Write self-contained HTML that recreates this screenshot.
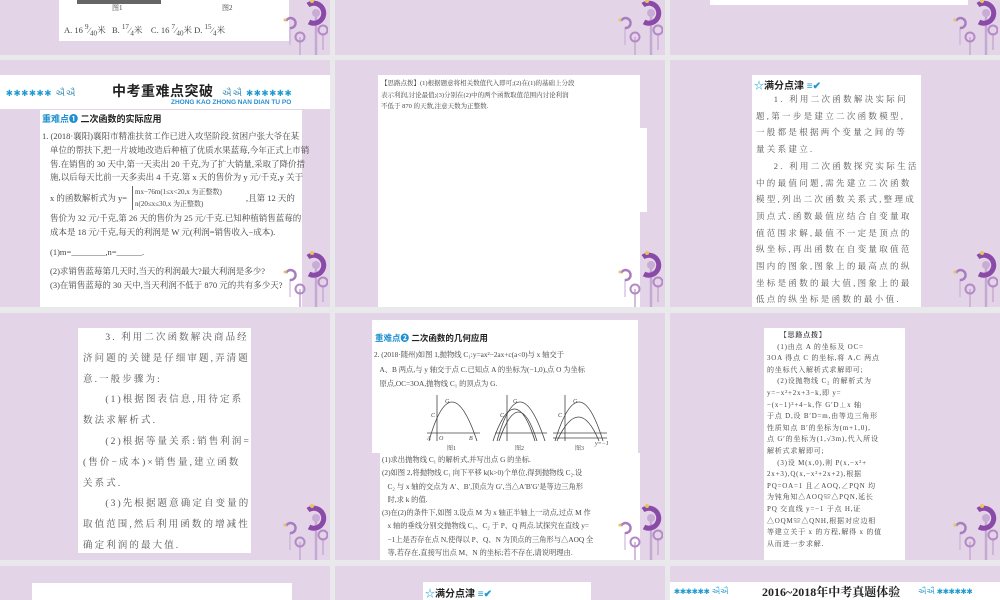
<!DOCTYPE html>
<html><head><meta charset="utf-8">
<style>
body{margin:0;width:1000px;height:600px;overflow:hidden;background:#e9e8ea;position:relative;font-family:"Liberation Serif","Noto Serif CJK SC",serif;color:#333}
.s{position:absolute;background:#e3d4e7;overflow:hidden}
.w{position:absolute;background:#fff}
.d{position:absolute;right:2px;bottom:0;width:46px;height:60px}
.t{position:absolute;font-size:8.5px;line-height:13.5px;color:#444;white-space:nowrap}
.b{position:absolute;font-size:9.5px;line-height:17px;color:#555;letter-spacing:2.6px;white-space:nowrap}
.hd{font-family:"Liberation Sans","Noto Sans CJK SC",sans-serif;font-weight:bold;color:#222}
</style></head><body>
<svg width="0" height="0" style="position:absolute"><defs>
<g id="fl">
<line x1="34" y1="18" x2="34" y2="60" stroke="#c6a9d3" stroke-width="2.5"/>
<line x1="18" y1="42" x2="18" y2="60" stroke="#c6a9d3" stroke-width="1.5"/>
<line x1="41" y1="38" x2="41" y2="55" stroke="#c6a9d3" stroke-width="1.5"/>
<line x1="8" y1="32" x2="8" y2="50" stroke="#c6a9d3" stroke-width="1"/>
<path d="M26 10 A10 10 0 1 1 27 27" fill="none" stroke="#8a4aa8" stroke-width="5"/>
<circle cx="34" cy="18" r="4" fill="#c9acd6"/>
<circle cx="30" cy="6" r="2" fill="#e8c45a"/>
<circle cx="18" cy="42" r="4.5" fill="none" stroke="#b48ac6" stroke-width="2"/>
<circle cx="41" cy="35" r="4.5" fill="none" stroke="#b48ac6" stroke-width="2"/>
<path d="M4 26 A5 5 0 1 1 8 33" fill="none" stroke="#a97cc0" stroke-width="2.5"/>
<circle cx="3" cy="25" r="1.5" fill="#e8c45a"/>
</g></defs></svg>

<!-- row 1 -->
<div class="s" style="left:0;top:0;width:330px;height:55px">
 <div class="w" style="left:59px;top:0;width:230px;height:41px">
  <div style="position:absolute;left:18px;top:0;width:84px;height:4px;background:#666"></div>
  <div class="t" style="left:53px;top:2px;font-size:7px">图1</div>
  <div class="t" style="left:163px;top:2px;font-size:7px">图2</div>
  <div class="t" style="left:5px;top:21px">A. 16 <sup>9</sup>⁄<sub>40</sub>米 &nbsp; B. <sup>17</sup>⁄<sub>4</sub>米 &nbsp;&nbsp; C. 16 <sup>7</sup>⁄<sub>40</sub>米 D. <sup>15</sup>⁄<sub>4</sub>米</div>
 </div>
 <svg class="d" viewBox="0 0 46 60"><use href="#fl"/></svg>
</div>
<div class="s" style="left:335px;top:0;width:330px;height:55px"><svg class="d" viewBox="0 0 46 60"><use href="#fl"/></svg></div>
<div class="s" style="left:670px;top:0;width:330px;height:55px">
 <div class="w" style="left:40px;top:0;width:258px;height:5px"></div>
 <svg class="d" viewBox="0 0 46 60"><use href="#fl"/></svg></div>

<!-- row 2 -->
<div class="s" style="left:0;top:60px;width:330px;height:247px">
 <div class="w" style="left:0;top:15px;width:330px;height:34px">
  <div style="position:absolute;left:6px;top:13px;color:#1e9ad0;font-size:9px;letter-spacing:1px">✱✱✱✱✱✱ <span style="color:#38a">ઐઐ</span></div>
  <div class="hd" style="position:absolute;left:112px;top:6px;font-size:14px;letter-spacing:0.5px">中考重难点突破</div>
  <div style="position:absolute;left:222px;top:13px;color:#1e9ad0;font-size:9px;letter-spacing:1px"><span style="color:#38a">ઐઐ</span> ✱✱✱✱✱✱</div>
  <div style="position:absolute;left:171px;top:24px;color:#2a8fd0;font-size:6.5px;font-weight:bold;font-family:'Liberation Sans',sans-serif">ZHONG KAO ZHONG NAN DIAN TU PO</div>
 </div>
 <div class="w" style="left:40px;top:50px;width:262px;height:234px">
  <div class="hd" style="position:absolute;left:2px;top:2px;font-size:9px"><span style="color:#1e8fd0">重难点❶</span> 二次函数的实际应用</div>
  <div class="t" style="left:2px;top:20px">1. (2018·襄阳)襄阳市精准扶贫工作已进入攻坚阶段.贫困户张大爷在某</div>
  <div class="t" style="left:10px;top:34px">单位的帮扶下,把一片坡地改造后种植了优质水果蓝莓,今年正式上市销</div>
  <div class="t" style="left:10px;top:48px">售.在销售的 30 天中,第一天卖出 20 千克,为了扩大销量,采取了降价措</div>
  <div class="t" style="left:10px;top:61px">施,以后每天比前一天多卖出 4 千克.第 x 天的售价为 y 元/千克,y 关于</div>
  <div class="t" style="left:92px;top:76px;font-size:7px;line-height:12px;border-left:1px solid #666;padding-left:2px">mx−76m(1≤x&lt;20,x 为正整数)<br>n(20≤x≤30,x 为正整数)</div>
  <div class="t" style="left:10px;top:82px">x 的函数解析式为 y=</div>
  <div class="t" style="left:206px;top:82px">,且第 12 天的</div>
  <div class="t" style="left:10px;top:102px">售价为 32 元/千克,第 26 天的售价为 25 元/千克.已知种植销售蓝莓的</div>
  <div class="t" style="left:10px;top:116px">成本是 18 元/千克,每天的利润是 W 元(利润=销售收入−成本).</div>
  <div class="t" style="left:10px;top:136px">(1)m=________,n=______.</div>
  <div class="t" style="left:10px;top:155px">(2)求销售蓝莓第几天时,当天的利润最大?最大利润是多少?</div>
  <div class="t" style="left:10px;top:169px">(3)在销售蓝莓的 30 天中,当天利润不低于 870 元的共有多少天?</div>
 </div>
 <svg class="d" viewBox="0 0 46 60"><use href="#fl"/></svg>
</div>
<div class="s" style="left:335px;top:60px;width:330px;height:247px">
 <div class="w" style="left:43px;top:15px;width:262px;height:232px"></div>
 <div class="w" style="left:300px;top:68px;width:12px;height:84px"></div>
 <div class="t" style="left:46px;top:18px;font-size:6.5px;line-height:11.5px">【思路点拨】(1)根据题意将相关数值代入即可;(2)在(1)的基础上分段<br>表示利润,讨论最值;(3)分别在(2)中的两个函数取值范围内讨论利润<br>不低于 870 的天数,注意天数为正整数.</div>
 <svg class="d" viewBox="0 0 46 60"><use href="#fl"/></svg>
</div>
<div class="s" style="left:670px;top:60px;width:330px;height:247px">
 <div class="w" style="left:82px;top:15px;width:169px;height:232px">
  <div class="hd" style="position:absolute;left:2px;top:2px;font-size:10px"><span style="color:#3ab0e0">☆</span>满分点津 <span style="color:#1e9ad0">≡✔</span></div>
  <div class="b" style="left:4px;top:16px;font-size:8.5px;line-height:16.7px;letter-spacing:2.3px">&nbsp;&nbsp;&nbsp;&nbsp;1. 利用二次函数解决实际问<br>题,第一步是建立二次函数模型,<br>一般都是根据两个变量之间的等<br>量关系建立.<br>&nbsp;&nbsp;&nbsp;&nbsp;2. 利用二次函数探究实际生活<br>中的最值问题,需先建立二次函数<br>模型,列出二次函数关系式,整理成<br>顶点式.函数最值应结合自变量取<br>值范围求解,最值不一定是顶点的<br>纵坐标,再出函数在自变量取值范<br>围内的图象,图象上的最高点的纵<br>坐标是函数的最大值,图象上的最<br>低点的纵坐标是函数的最小值.</div>
 </div>
 <svg class="d" viewBox="0 0 46 60"><use href="#fl"/></svg>
</div>

<!-- row 3 -->
<div class="s" style="left:0;top:313px;width:330px;height:247px">
 <div class="w" style="left:78px;top:15px;width:173px;height:225px">
  <div class="b" style="left:5px;top:0px;line-height:20.8px;letter-spacing:2.1px">&nbsp;&nbsp;&nbsp;&nbsp;&nbsp;3. 利用二次函数解决商品经<br>济问题的关键是仔细审题,弄清题<br>意.一般步骤为:<br>&nbsp;&nbsp;&nbsp;&nbsp;&nbsp;(1)根据图表信息,用待定系<br>数法求解析式.<br>&nbsp;&nbsp;&nbsp;&nbsp;&nbsp;(2)根据等量关系:销售利润=<br>(售价−成本)×销售量,建立函数<br>关系式.<br>&nbsp;&nbsp;&nbsp;&nbsp;&nbsp;(3)先根据题意确定自变量的<br>取值范围,然后利用函数的增减性<br>确定利润的最大值.</div>
 </div>
 <svg class="d" viewBox="0 0 46 60"><use href="#fl"/></svg>
</div>
<div class="s" style="left:335px;top:313px;width:330px;height:247px">
 <div class="w" style="left:37px;top:7px;width:266px;height:133px"></div>
 <div class="w" style="left:45px;top:140px;width:260px;height:107px"></div>
 <div class="hd" style="position:absolute;left:40px;top:19px;font-size:8.5px"><span style="color:#1e8fd0">重难点❷</span> 二次函数的几何应用</div>
 <div class="t" style="left:39px;top:35px;font-size:7.3px;line-height:14.7px">2. (2018·随州)如图 1,抛物线 C₁:y=ax²−2ax+c(a&lt;0)与 x 轴交于<br>&nbsp;&nbsp;&nbsp;A、B 两点,与 y 轴交于点 C.已知点 A 的坐标为(−1,0),点 O 为坐标<br>&nbsp;&nbsp;&nbsp;原点,OC=3OA,抛物线 C₁ 的顶点为 G.</div>
 <svg style="position:absolute;left:50px;top:80px" width="250" height="60" viewBox="0 0 250 60">
  <g fill="none" stroke="#444" stroke-width="0.8">
   <line x1="42" y1="40" x2="95" y2="40"/><line x1="52" y1="2" x2="52" y2="48"/>
   <path d="M44 48 Q66 -30 92 48"/>
   <line x1="110" y1="40" x2="162" y2="40"/><line x1="122" y1="2" x2="122" y2="48"/>
   <path d="M112 48 Q134 -30 160 48"/><path d="M114 48 Q134 -10 152 48"/><path d="M108 48 Q130 -16 150 48"/>
   <line x1="168" y1="40" x2="222" y2="40"/><line x1="180" y1="2" x2="180" y2="48"/><line x1="168" y1="45" x2="222" y2="45"/>
   <path d="M170 48 Q194 -30 218 48"/><path d="M172 48 Q194 0 214 48"/>
  </g>
  <g font-size="6" fill="#444" font-style="italic"><text x="60" y="10">G</text><text x="46" y="24">C</text><text x="42" y="47">A</text><text x="54" y="47">O</text><text x="84" y="47">B</text>
  <text x="128" y="10">G</text><text x="115" y="24">C</text><text x="188" y="10">G</text><text x="173" y="24">C</text><text x="210" y="52">y=−1</text></g>
  <g font-size="6" fill="#444"><text x="62" y="57">图1</text><text x="130" y="57">图2</text><text x="190" y="57">图3</text></g>
 </svg>
 <div class="t" style="left:47px;top:140px;font-size:7.3px;line-height:13.3px">(1)求出抛物线 C₁ 的解析式,并写出点 G 的坐标.<br>(2)如图 2,将抛物线 C₁ 向下平移 k(k&gt;0)个单位,得到抛物线 C₂.设<br>&nbsp;&nbsp;&nbsp;C₂ 与 x 轴的交点为 A′、B′,顶点为 G′,当△A′B′G′是等边三角形<br>&nbsp;&nbsp;&nbsp;时,求 k 的值.<br>(3)在(2)的条件下,如图 3,设点 M 为 x 轴正半轴上一动点,过点 M 作<br>&nbsp;&nbsp;&nbsp;x 轴的垂线分别交抛物线 C₁、C₂ 于 P、Q 两点.试探究在直线 y=<br>&nbsp;&nbsp;&nbsp;−1上是否存在点 N,使得以 P、Q、N 为顶点的三角形与△AOQ 全<br>&nbsp;&nbsp;&nbsp;等,若存在,直接写出点 M、N 的坐标;若不存在,请说明理由.</div>
 <svg class="d" viewBox="0 0 46 60"><use href="#fl"/></svg>
</div>
<div class="s" style="left:670px;top:313px;width:330px;height:247px">
 <div class="w" style="left:94px;top:15px;width:141px;height:232px"></div>
 <div class="t" style="left:97px;top:17px;font-size:7px;line-height:11.6px;letter-spacing:0.8px"><b>&nbsp;&nbsp;&nbsp;&nbsp;&nbsp;【思路点拨】</b><br>&nbsp;&nbsp;&nbsp;&nbsp;(1)由点 A 的坐标及 OC=<br>3OA 得点 C 的坐标,将 A,C 两点<br>的坐标代入解析式求解即可;<br>&nbsp;&nbsp;&nbsp;&nbsp;(2)设抛物线 C₂ 的解析式为<br>y=−x²+2x+3−k,即 y=<br>−(x−1)²+4−k,作 G′D⊥x 轴<br>于点 D,设 B′D=m,由等边三角形<br>性质知点 B′的坐标为(m+1,0),<br>点 G′的坐标为(1,√3m),代入所设<br>解析式求解即可;<br>&nbsp;&nbsp;&nbsp;&nbsp;(3)设 M(x,0),则 P(x,−x²+<br>2x+3),Q(x,−x²+2x+2),根据<br>PQ=OA=1 且∠AOQ,∠PQN 均<br>为钝角知△AOQ≌△PQN,延长<br>PQ 交直线 y=−1 于点 H,证<br>△OQM≌△QNH,根据对应边相<br>等建立关于 x 的方程,解得 x 的值<br>从而进一步求解.</div>
 <svg class="d" viewBox="0 0 46 60"><use href="#fl"/></svg>
</div>

<!-- row 4 -->
<div class="s" style="left:0;top:566px;width:330px;height:34px">
 <div class="w" style="left:32px;top:17px;width:260px;height:17px"></div></div>
<div class="s" style="left:335px;top:566px;width:330px;height:34px">
 <div class="w" style="left:88px;top:16px;width:168px;height:18px">
  <div class="hd" style="position:absolute;left:2px;top:3px;font-size:10px"><span style="color:#3ab0e0">☆</span>满分点津 <span style="color:#1e9ad0">≡✔</span></div></div></div>
<div class="s" style="left:670px;top:566px;width:330px;height:34px">
 <div class="w" style="left:0;top:16px;width:330px;height:18px">
  <div style="position:absolute;left:4px;top:5px;color:#1e9ad0;font-size:8px">✱✱✱✱✱✱ ઐઐ</div>
  <div class="hd" style="position:absolute;left:92px;top:1px;font-size:12px;font-family:'Liberation Serif','Noto Serif CJK SC',serif">2016~2018年中考真题体验</div>
  <div style="position:absolute;left:248px;top:5px;color:#1e9ad0;font-size:8px">ઐઐ ✱✱✱✱✱✱</div></div></div>
</body></html>
